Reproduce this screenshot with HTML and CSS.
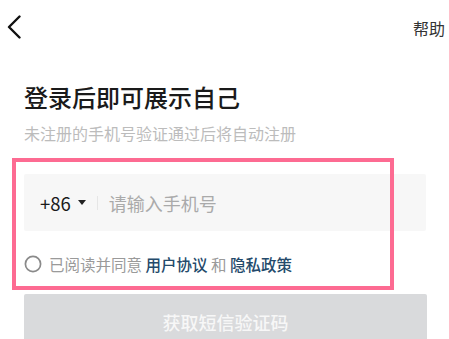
FILE: index.html
```html
<!DOCTYPE html>
<html lang="zh-CN">
<head>
<meta charset="utf-8">
<title>登录</title>
<link rel="stylesheet" href="styles.css">
</head>
<body>
<div class="page">
  <header class="topbar">
    <svg class="back" width="14" height="24" viewBox="0 0 14 24" aria-hidden="true">
      <path d="M12.5 1.5 L2 12 L12.5 22.5" fill="none" stroke="#111" stroke-width="2.4" stroke-linecap="round" stroke-linejoin="round"/>
    </svg>
    <span class="help">帮助</span>
  </header>
  <main class="content">
    <h1 class="title">登录后即可展示自己</h1>
    <p class="subtitle">未注册的手机号验证通过后将自动注册</p>
    <div class="phone">
      <span class="code">+86</span>
      <span class="caret"></span>
      <span class="divider"></span>
      <span class="placeholder">请输入手机号</span>
    </div>
    <div class="agree">
      <svg class="radio" width="18" height="18" viewBox="0 0 18 18" aria-hidden="true">
        <circle cx="9" cy="9" r="7.6" fill="none" stroke="#8a8a8a" stroke-width="1.7"/>
      </svg>
      <span class="agree-text">已阅读并同意 <a class="link">用户协议</a> 和 <a class="link">隐私政策</a></span>
    </div>
    <button class="submit">获取短信验证码</button>
  </main>
  <div class="highlight"></div>
</div>
</body>
</html>
```

FILE: styles.css
```css
html, body {
  margin: 0;
  padding: 0;
  background: #fff;
}
body {
  font-family: "Noto Sans CJK SC", "Noto Sans", sans-serif;
  color: #1a1a1a;
  width: 449px;
  height: 339px;
  overflow: hidden;
}
.page {
  position: relative;
  height: 339px;
}
.topbar {
  height: 54px;
  display: flex;
  align-items: center;
  justify-content: space-between;
  padding: 0 4px 0 7px;
}
.back {
  display: block;
}
.help {
  font-size: 16px;
  color: #333;
  line-height: 20px;
  margin-top: 2px;
}
.content {
  padding: 0 23px 0 24px;
}
.title {
  margin: 28px 0 0 0;
  font-size: 24px;
  line-height: 30px;
  font-weight: 500;
  color: #1a1a1a;
}
.subtitle {
  margin: 11px 0 0 0;
  font-size: 16px;
  line-height: 20px;
  color: #bcbcbc;
}
.phone {
  margin-top: 31px;
  height: 57px;
  background: #f7f7f7;
  border-radius: 2px;
  display: flex;
  align-items: center;
  padding-left: 16px;
}
.code {
  font-size: 18.5px;
  color: #1a1a1a;
  line-height: 24px;
}
.caret {
  width: 0;
  height: 0;
  border-left: 4px solid transparent;
  border-right: 4px solid transparent;
  border-top: 5px solid #222;
  margin-left: 7px;
}
.divider {
  width: 1px;
  height: 14px;
  background: #e6e6e6;
  margin-left: 11px;
}
.placeholder {
  font-size: 18px;
  color: #aaaaaa;
  line-height: 24px;
  margin-left: 11px;
}
.agree {
  margin-top: 23px;
  height: 20px;
  display: flex;
  align-items: center;
}
.radio {
  display: block;
  flex-shrink: 0;
  margin-left: 0;
}
.agree-text {
  margin-left: 7px;
  font-size: 15.5px;
  line-height: 20px;
  color: #9a9a9a;
}
.link {
  color: #244a6b;
  font-weight: 500;
}
.submit {
  display: block;
  margin-top: 20px;
  width: 403px;
  height: 56px;
  border: none;
  border-radius: 2px;
  background: #d9dadc;
  color: #f7f7f7;
  font-family: "Noto Sans CJK SC", "Noto Sans", sans-serif;
  font-size: 18px;
  font-weight: 500;
  padding: 0;
}
.highlight {
  position: absolute;
  left: 12px;
  top: 158px;
  width: 374px;
  height: 124px;
  border: 4px solid #fd6b92;
  pointer-events: none;
}
```
